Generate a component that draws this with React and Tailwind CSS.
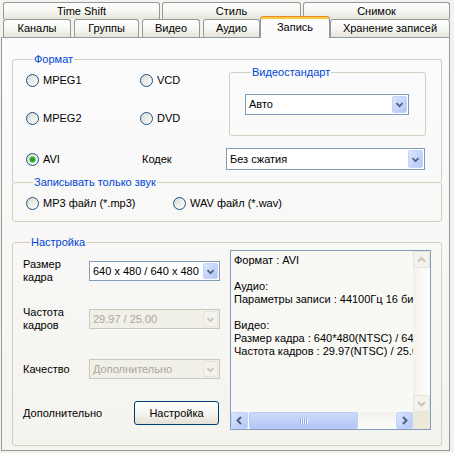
import React from "react";
import clsx from "clsx";

const Chevron = ({ dir = "down", color = "#4d6185" }) => {
  const d = {
    down: "M4 6l3.5 3.5L11 6",
    up: "M4 9.5L7.5 6L11 9.5",
    left: "M9 4L5.5 7.5L9 11",
    right: "M6 4l3.5 3.5L6 11",
  }[dir];
  return (
    <svg width="15" height="15" viewBox="0 0 15 15">
      <path d={d} fill="none" stroke={color} strokeWidth="2" />
    </svg>
  );
};

const Tab = ({ label, className, selected }) => (
  <div
    className={clsx(
      "flex items-center justify-center border border-b-0 rounded-t-[3px] whitespace-nowrap",
      selected
        ? "relative z-10 h-[22px] -mb-[1px] border-[#919b9c] border-t-[#e68b2c] bg-[#fcfcfe] shadow-[inset_0_2px_0_#ffc83c]"
        : "border-[#919b9c] bg-linear-to-b from-[#fefefe] via-[#f7f7f3] to-[#e6e4da]",
      className
    )}
  >
    {label}
  </div>
);

const Radio = ({ label, checked, className }) => (
  <label className={clsx("flex items-center gap-[4px] h-[13px]", className)}>
    <span className="w-[13px] h-[13px] shrink-0 rounded-full border border-[#1c5180] bg-linear-to-br from-[#dcdad3] to-white flex items-center justify-center">
      {checked && (
        <span className="w-[5px] h-[5px] rounded-full bg-[#21a121] shadow-[0_0_0_1px_#8ed88e]" />
      )}
    </span>
    <span className="whitespace-nowrap">{label}</span>
  </label>
);

const Combo = ({ value, disabled, className }) => (
  <div
    className={clsx(
      "flex items-stretch border",
      disabled ? "border-[#c9c7ba] bg-[#f0efe8] text-[#aca899]" : "border-[#7f9db9] bg-white",
      className
    )}
  >
    <div className="flex-1 flex items-center pl-[3px] whitespace-nowrap overflow-hidden">
      {value}
    </div>
    <div
      className={clsx(
        "m-[1px] w-[15px] flex items-center justify-center rounded-[2px] border",
        disabled
          ? "border-[#e6e4da] bg-[#f3f2ec]"
          : "border-[#c3d3fd] bg-linear-to-br from-[#dce7fd] to-[#b3c6f6]"
      )}
    >
      <Chevron color={disabled ? "#c9c7ba" : "#4d6185"} />
    </div>
  </div>
);

const ScrollBtn = ({ dir, disabled }) => (
  <div
    className={clsx(
      "w-[17px] h-[17px] shrink-0 flex items-center justify-center rounded-[2px] border",
      disabled
        ? "border-[#e6e4da] bg-[#f3f2ec]"
        : "border-[#c3d3fd] bg-linear-to-br from-[#dce7fd] to-[#b3c6f6]"
    )}
  >
    <Chevron dir={dir} color={disabled ? "#c9c7ba" : "#4d6185"} />
  </div>
);

const infoLines = [
  "Формат : AVI",
  "",
  "Аудио:",
  "Параметры записи : 44100Гц 16 бит Стерео",
  "",
  "Видео:",
  "Размер кадра : 640*480(NTSC) / 640*480(PAL)",
  "Частота кадров : 29.97(NTSC) / 25.00(PAL)",
];

export default function App() {
  return (
    <div className="w-[454px] h-[453px] overflow-hidden bg-[#f3f2ec] pl-[1px] text-[11px] leading-[13px] text-black font-['Liberation_Sans',Arial,sans-serif]">
      {/* back row of tabs */}
      <div className="flex pl-[2px] pt-[2px] h-[19px]">
        <Tab label="Time Shift" className="w-[157px] h-[17px]" />
        <Tab label="Стиль" className="ml-[2px] w-[139px] h-[17px]" />
        <Tab label="Снимок" className="ml-[2px] w-[147px] h-[17px]" />
      </div>
      {/* front row of tabs */}
      <div className="flex items-end pl-[2px] h-[18px]">
        <Tab label="Каналы" className="w-[68px] h-[18px]" />
        <Tab label="Группы" className="ml-[3px] w-[65px] h-[18px]" />
        <Tab label="Видео" className="ml-[3px] w-[58px] h-[18px]" />
        <Tab label="Аудио" className="ml-[3px] w-[57px] h-[18px]" />
        <Tab label="Запись" selected className="w-[70px]" />
        <Tab label="Хранение записей" className="w-[120px] h-[18px]" />
      </div>

      <div className="w-[449px] h-[414px] border border-[#919b9c] bg-linear-to-b from-[#fcfcfe] to-[#f4f3ee]">
        <fieldset className="ml-[10px] mt-[15px] w-[430px] border border-b-0 border-[#d0d0bf] rounded-t-[3px] pl-[13px] pb-[12px]">
          <legend className="ml-[7px] px-[1px] text-[#0046d5]">Формат</legend>
          <div className="flex">
            <div className="w-[203px] pt-[8px] flex flex-col gap-[25px]">
              <div className="flex">
                <Radio label="MPEG1" className="w-[114px]" />
                <Radio label="VCD" />
              </div>
              <div className="flex">
                <Radio label="MPEG2" className="w-[114px]" />
                <Radio label="DVD" />
              </div>
            </div>
            <fieldset className="w-[197px] h-[70px] border border-[#d0d0bf] rounded-[3px] pl-[15px]">
              <legend className="ml-[6px] px-[1px] text-[#0046d5]">Видеостандарт</legend>
              <Combo value="Авто" className="mt-[15px] w-[164px] h-[21px]" />
            </fieldset>
          </div>
          <div className="flex items-center h-[22px] mt-[12px]">
            <Radio label="AVI" checked className="w-[116px]" />
            <div className="w-[84px]">Кодек</div>
            <Combo value="Без сжатия" className="w-[199px] h-[22px]" />
          </div>
        </fieldset>

        <fieldset className="ml-[10px] -mt-[6px] w-[430px] border border-[#d0d0bf] rounded-[3px] pl-[13px] pb-[11px]">
          <legend className="ml-[7px] px-[1px] text-[#0046d5]">Записывать только звук</legend>
          <div className="flex mt-[8px]">
            <Radio label="MP3 файл (*.mp3)" className="w-[147px]" />
            <Radio label="WAV файл (*.wav)" />
          </div>
        </fieldset>

        <fieldset className="ml-[10px] mt-[14px] w-[430px] border border-[#d0d0bf] rounded-[3px] pl-[10px] pb-[15px]">
          <legend className="ml-[7px] px-[1px] text-[#0046d5]">Настройка</legend>
          <div className="flex items-start">
            <div className="w-[197px] flex flex-col">
              <div className="flex items-center h-[24px] mt-[10px]">
                <div className="w-[66px]">Размер<br />кадра</div>
                <Combo value="640 x 480 / 640 x 480" className="w-[131px] h-[20px]" />
              </div>
              <div className="flex items-center h-[24px] mt-[24px]">
                <div className="w-[66px]">Частота<br />кадров</div>
                <Combo value="29.97 / 25.00" disabled className="w-[131px] h-[20px]" />
              </div>
              <div className="flex items-center h-[24px] mt-[26px]">
                <div className="w-[66px]">Качество</div>
                <Combo value="Дополнительно" disabled className="w-[131px] h-[20px]" />
              </div>
              <div className="flex items-center h-[24px] mt-[20px]">
                <div className="w-[111px]">Дополнительно</div>
                <button className="w-[85px] h-[24px] rounded-[3px] border border-[#003c74] bg-linear-to-b from-white via-[#f5f4ef] to-[#e3e1d6]">
                  Настройка
                </button>
              </div>
            </div>

            <div className="ml-[10px] mt-[1px] w-[201px] h-[180px] border border-[#7f9db9] bg-[#f8f8f5] flex flex-col">
              <div className="flex flex-1 min-h-0">
                <div className="flex-1 overflow-hidden whitespace-nowrap pl-[3px] pt-[3px]">
                  {infoLines.map((line, i) => (
                    <div key={i} className="h-[13px]">{line}</div>
                  ))}
                </div>
                <div className="w-[17px] flex flex-col justify-between bg-linear-to-r from-[#f3f1ec] to-[#fefefe]">
                  <ScrollBtn dir="up" disabled />
                  <ScrollBtn dir="down" disabled />
                </div>
              </div>
              <div className="flex h-[17px]">
                <div className="flex flex-1 bg-linear-to-b from-[#f3f1ec] to-[#fefefe]">
                  <ScrollBtn dir="left" />
                  <div className="ml-[1px] w-[109px] flex items-center justify-center gap-[1px] rounded-[2px] border border-[#b9cdf7] bg-linear-to-b from-[#cbdafc] to-[#b3c6f6]">
                    <span className="w-[1px] h-[6px] bg-[#8cb0f8] shadow-[1px_0_0_#eef4fe]" />
                    <span className="w-[1px] h-[6px] bg-[#8cb0f8] shadow-[1px_0_0_#eef4fe]" />
                    <span className="w-[1px] h-[6px] bg-[#8cb0f8] shadow-[1px_0_0_#eef4fe]" />
                    <span className="w-[1px] h-[6px] bg-[#8cb0f8] shadow-[1px_0_0_#eef4fe]" />
                  </div>
                  <div className="flex-1" />
                  <ScrollBtn dir="right" />
                </div>
                <div className="w-[17px] bg-[#ece9d8]" />
              </div>
            </div>
          </div>
        </fieldset>
      </div>
    </div>
  );
}
